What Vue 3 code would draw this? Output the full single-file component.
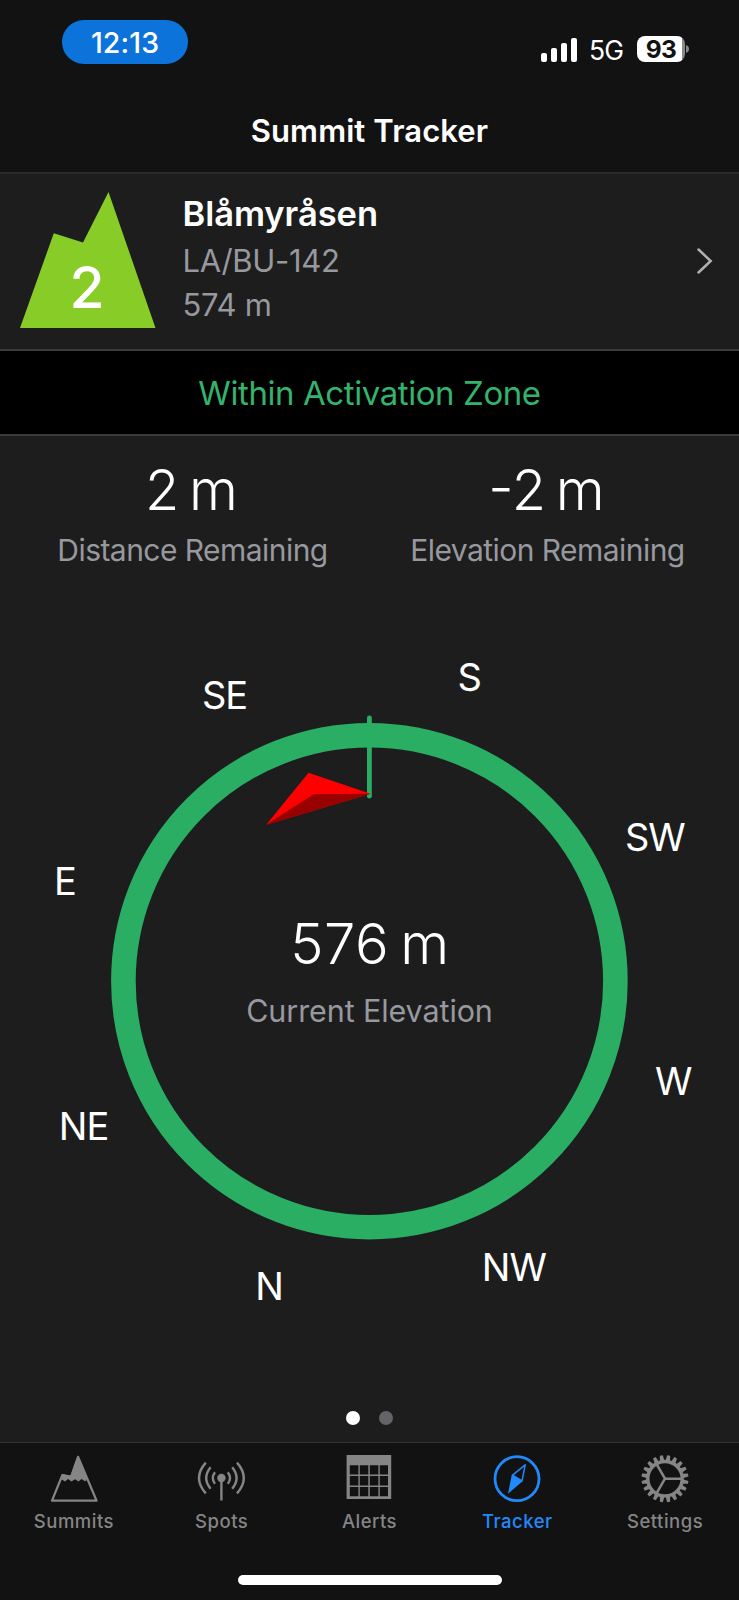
<script setup>
const bars = [9, 14, 19, 24]

const directions = [
  { name: 'S', x: 469.2, y: 255 },
  { name: 'SW', x: 654.8, y: 415 },
  { name: 'W', x: 673.3, y: 659 },
  { name: 'NW', x: 513.8, y: 845 },
  { name: 'N', x: 269, y: 864 },
  { name: 'NE', x: 83.5, y: 704 },
  { name: 'E', x: 64.8, y: 459 },
  { name: 'SE', x: 224.5, y: 273 },
]

const readings = [
  { value: '2 m', label: 'Distance Remaining', id: 'distance' },
  { value: '-2 m', label: 'Elevation Remaining', id: 'elevation' },
]

const tabs = [
  { id: 'summits', label: 'Summits' },
  { id: 'spots', label: 'Spots' },
  { id: 'alerts', label: 'Alerts' },
  { id: 'tracker', label: 'Tracker', active: true },
  { id: 'settings', label: 'Settings' },
]

const teeth = Array.from({ length: 20 }, (_, i) => i * 18 + 9)
</script>

<template>
  <div class="screen">
    <header class="top">
      <div class="status">
        <div class="time">12:13</div>
        <div class="indicators">
          <div class="signal">
            <i v-for="h in bars" :key="h" :style="{ height: h + 'px' }"></i>
          </div>
          <span class="network">5G</span>
          <div class="battery-wrap">
            <div class="battery">93</div>
            <svg class="nub" width="3" height="8" viewBox="0 0 3 8"><path d="M0 0Q3 1.2 3 4T0 8Z" fill="#8a8a8a" /></svg>
          </div>
        </div>
      </div>
      <h1 class="title">Summit Tracker</h1>
    </header>

    <section class="summit">
      <svg class="mountain" width="136" height="136" viewBox="0 0 136 136">
        <path d="M0 136 33.8 41.3 63 50.5 88.5 0 135.5 136Z" fill="#88cc27" />
        <text x="67" y="116" text-anchor="middle">2</text>
      </svg>
      <div class="info">
        <div class="name">Blåmyråsen</div>
        <div class="ref">LA/BU-142</div>
        <div class="alt">574 m</div>
      </div>
      <svg class="chevron" width="18" height="28" viewBox="0 0 18 28">
        <path d="M2.5 2.5 14.7 14 2.5 25.5" fill="none" stroke="#b0b0b2" stroke-width="2.5" stroke-linecap="round" />
      </svg>
    </section>

    <div class="zone"><span>Within Activation Zone</span></div>

    <section class="readings">
      <div v-for="r in readings" :key="r.id" class="reading" :class="r.id">
        <div class="value">{{ r.value }}</div>
        <div class="label">{{ r.label }}</div>
      </div>
    </section>

    <svg class="compass" width="739" height="904" viewBox="0 0 739 904">
      <circle cx="369.4" cy="545.2" r="246" fill="none" stroke="#29ae64" stroke-width="24.6" />
      <path d="M369.4 281.8V360.2" stroke="#29ae64" stroke-width="4.8" stroke-linecap="round" />
      <path d="M308.5 336.7 370.5 357.7 266.2 388.7Z" fill="#fe0000" />
      <path d="M313.5 358.3 370.5 357.7 266.2 388.7Z" fill="#990000" />
      <text v-for="d in directions" :key="d.name" class="dir" :x="d.x" :y="d.y" text-anchor="middle">{{ d.name }}</text>
      <text class="big" x="370" y="528" text-anchor="middle">576 m</text>
      <text class="small" x="369.5" y="585.7" text-anchor="middle">Current Elevation</text>
    </svg>

    <div class="pages"><i class="on"></i><i></i></div>

    <nav class="tabs">
      <div v-for="t in tabs" :key="t.id" class="tab" :class="{ active: t.active }">
        <svg width="50" height="50" viewBox="0 0 50 50">
          <g v-if="t.id === 'summits'">
            <path d="M3 47.7 13.4 22 22 24 29 3.8 47.6 47.7Z" fill="none" stroke="currentColor" stroke-width="2.2" stroke-linejoin="round" />
            <path d="M13 21 21.5 22.5 29 2.5 38 27 36 28.2 32.5 26 29.5 28.5 26 26.2 22.5 28.5 19 26 16 28.4 12 26Z" fill="currentColor" />
          </g>
          <g v-else-if="t.id === 'spots'" transform="translate(-0.6 0)" fill="none" stroke="currentColor" stroke-width="2.4">
            <circle cx="25" cy="25" r="4.2" fill="currentColor" stroke="none" />
            <path d="M25 27V47.5" />
            <path d="M18.6 19.2Q14.2 25 18.6 30.8M31.4 19.2Q35.8 25 31.4 30.8M14.2 14.3Q5.4 25 14.2 35.7M35.8 14.3Q44.6 25 35.8 35.7M9.4 9.6Q-4.2 25 9.4 40.4M40.6 9.6Q54.2 25 40.6 40.4" />
          </g>
          <path v-else-if="t.id === 'alerts'" fill="currentColor" fill-rule="evenodd" d="M2.6 2H47.2V46H2.6ZM5.8 12.2v9.2h8.6v-9.2ZM15.8 12.2v9.2h8.5v-9.2ZM25.8 12.2v9.2h8.6v-9.2ZM35.8 12.2v9.2h8.2v-9.2ZM5.8 23v9.4h8.6V23ZM15.8 23v9.4h8.5V23ZM25.8 23v9.4h8.6V23ZM35.8 23v9.4h8.2V23ZM5.8 34v9.3h8.6V34ZM15.8 34v9.3h8.5V34ZM25.8 34v9.3h8.6V34ZM35.8 34v9.3h8.2V34Z" />
          <g v-else-if="t.id === 'tracker'">
            <circle cx="25" cy="25.7" r="22" fill="none" stroke="currentColor" stroke-width="2.8" />
            <path d="M33.2 11.8 30 27.8 20.6 22.2Z" fill="none" stroke="currentColor" stroke-width="1.5" stroke-linejoin="round" />
            <path d="M19.8 21.4 30.6 28.2 16 40.7Z" fill="currentColor" />
          </g>
          <g v-else fill="none" stroke="currentColor">
            <circle cx="25" cy="25.7" r="17.2" stroke-width="3.4" />
            <path v-for="a in teeth" :key="a" d="M22.7 8H27.3L26.5 2.2H23.5Z" :transform="`rotate(${a} 25 25.7)`" fill="currentColor" stroke="none" />
            <path d="M25 25.7H42M25 25.7 16.5 11M25 25.7 16.5 40.4" stroke-width="2.5" />
          </g>
        </svg>
        <span>{{ t.label }}</span>
      </div>
    </nav>

    <div class="home"><i></i></div>
  </div>
</template>

<style>
html,
body {
  background: #121212;
}
</style>

<style scoped>
.screen {
  display: flex;
  flex-direction: column;
  width: 739px;
  height: 1600px;
  overflow: hidden;
  background: #1d1d1d;
  color: #fff;
  font-family: Inter, "Liberation Sans", sans-serif;
}

.top {
  box-sizing: border-box;
  height: 174px;
  background: #121212;
  border-bottom: 2px solid #2a2a2a;
}

.status {
  box-sizing: border-box;
  display: flex;
  justify-content: space-between;
  align-items: flex-start;
  height: 104px;
  padding: 20px 50px 0 62px;
}

.time {
  width: 126px;
  height: 44px;
  border-radius: 22px;
  background: #0c73da;
  font-size: 28.5px;
  font-weight: 500;
  line-height: 45px;
  text-align: center;
  letter-spacing: 0.1px;
}

.indicators {
  display: flex;
  align-items: center;
  margin-top: 16px;
  height: 26px;
}

.signal {
  display: flex;
  align-items: flex-end;
  gap: 3.9px;
  height: 24px;
  padding-top: 1px;
}

.signal i {
  width: 6.2px;
  border-radius: 2px;
  background: #fff;
}

.network {
  width: 37px;
  margin-left: 12px;
  font-size: 26.5px;
  line-height: 26px;
  letter-spacing: -0.8px;
  padding-top: 1px;
}

.battery-wrap {
  display: flex;
  align-items: center;
  gap: 1px;
  margin-left: 11px;
}

.battery {
  width: 48px;
  height: 26px;
  border-radius: 8px;
  background: linear-gradient(90deg, #fff 45px, #8a8a8a 45px);
  color: #121212;
  font-size: 24.5px;
  font-weight: 700;
  line-height: 27px;
  text-align: center;
  letter-spacing: -0.7px;
}

.title {
  margin: 4px 0 0;
  font-size: 31px;
  font-weight: 600;
  line-height: 46px;
  text-align: center;
  letter-spacing: 0.1px;
}

.summit {
  box-sizing: border-box;
  display: flex;
  height: 177px;
  padding: 18px 25px 0 20px;
  border-bottom: 2px solid #3a3a3a;
}

.mountain text {
  fill: #fff;
  font-size: 57px;
  font-weight: 500;
}

.info {
  flex: 1;
  margin-left: 26.5px;
}

.name {
  height: 47px;
  font-size: 34.5px;
  font-weight: 600;
  line-height: 43px;
  letter-spacing: -0.05px;
}

.ref,
.alt {
  color: #98989f;
  font-size: 31px;
  font-weight: 400;
  line-height: 44px;
  letter-spacing: -0.3px;
}

.chevron {
  margin-top: 55px;
}

.zone {
  box-sizing: border-box;
  height: 85px;
  border-bottom: 2px solid #3a3a3a;
  background: #000;
  color: #33b36c;
  font-size: 33px;
  font-weight: 400;
  line-height: 84px;
  text-align: center;
  letter-spacing: -0.42px;
}

.readings {
  display: flex;
  height: 0;
  padding-left: 15px;
}

.reading {
  width: 355px;
  padding-top: 22px;
  text-align: center;
}

.value {
  font-size: 56px;
  font-weight: 300;
  line-height: 64px;
  word-spacing: -6px;
}

.distance .value,
.elevation .value {
  padding-right: 2px;
}

.label {
  padding-top: 6px;
  color: #98989f;
  font-size: 30px;
  font-weight: 400;
  line-height: 44px;
  letter-spacing: -0.55px;
}

.compass {
  display: block;
  flex: none;
}

.compass text {
  fill: #fff;
}

.compass .dir {
  font-size: 38px;
  font-weight: 400;
  letter-spacing: -1px;
}

.compass .big {
  font-size: 56px;
  font-weight: 300;
  letter-spacing: 0.5px;
  word-spacing: -5px;
}

.compass .small {
  fill: #98989f;
  font-size: 30.5px;
  font-weight: 400;
  letter-spacing: -0.1px;
}

.pages {
  box-sizing: border-box;
  display: flex;
  justify-content: center;
  gap: 18.6px;
  height: 102px;
  padding: 71px 0 0;
}

.pages i {
  width: 14.4px;
  height: 14.4px;
  border-radius: 50%;
  background: #636368;
}

.pages .on {
  background: #fff;
}

.tabs {
  box-sizing: border-box;
  display: flex;
  height: 110px;
  padding-top: 10px;
  border-top: 1px solid #343434;
  background: #121212;
}

.tab {
  flex: 1;
  display: flex;
  flex-direction: column;
  align-items: center;
  color: #858585;
  font-size: 18.5px;
  font-weight: 500;
  line-height: 36px;
  letter-spacing: 0.5px;
}

.tab svg {
  display: block;
}

.tab.active {
  color: #2289fb;
}

.home {
  display: flex;
  justify-content: center;
  flex: 1;
  padding-top: 23px;
  background: #121212;
}

.home i {
  width: 264px;
  height: 10px;
  border-radius: 5px;
  background: #fff;
}
</style>
